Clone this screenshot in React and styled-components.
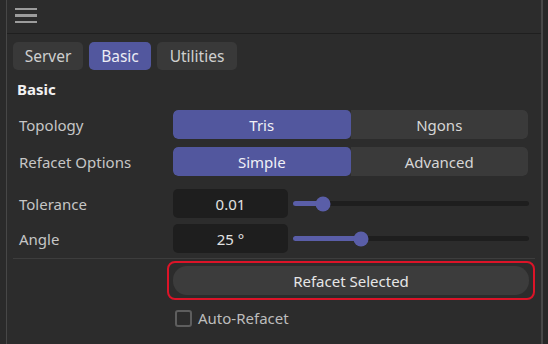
import { useState } from 'react'
import styled, { createGlobalStyle } from 'styled-components';

const GlobalStyle = createGlobalStyle`
  body {
    margin: 0;
    background: #262626;
    font-family: "Noto Sans", "Open Sans", sans-serif;
  }
`;

const Frame = styled.div`
  display: flex;
  height: 344px;
  width: 548px;
  overflow: hidden;
`;

const Gutter = styled.div`
  width: 6px;
  background: #2a2a2a;
  border-right: 1px solid #474747;
`;

const EdgeRight = styled.div`
  flex: 1;
  background: #272727;
  border-left: 2px solid #474747;
`;

const Panel = styled.div`
  width: 534px;
  background: #2c2c2c;
  display: flex;
  flex-direction: column;
`;

const TopBar = styled.div`
  height: 33px;
  border-bottom: 1px solid #1f1f1f;
  display: flex;
  align-items: center;
  padding-left: 8px;
`;

const Burger = styled.div`
  display: flex;
  flex-direction: column;
  gap: 4px;
  margin-top: -2px;

  span {
    display: block;
    width: 22px;
    height: 2.5px;
    background: #9c9c9c;
  }
`;

const Body = styled.div`
  padding: 8px 6px 0 6px;
  display: flex;
  flex-direction: column;
`;

const Tabs = styled.div`
  display: flex;
  gap: 6px;
`;

const Tab = styled.div`
  height: 28px;
  width: ${p => p.$w}px;
  border-radius: 5px;
  background: ${p => (p.$active ? '#52579e' : '#393939')};
  color: ${p => (p.$active ? '#ececf4' : '#cfcfcf')};
  font-size: 15.5px;
  display: flex;
  align-items: center;
  justify-content: center;
`;

const Heading = styled.div`
  font-weight: 700;
  font-size: 15px;
  color: #f2f2f2;
  padding-left: 4px;
  margin-top: 8px;
  height: 22px;
  line-height: 22px;
`;

const Row = styled.div`
  display: flex;
  align-items: center;
  height: 29px;
  margin-top: ${p => p.$mt}px;
`;

const Label = styled.div`
  width: 154px;
  padding-left: 6px;
  color: #c6c6c6;
  font-size: 15px;
`;

const Segments = styled.div`
  display: flex;
  width: 355px;
  height: 100%;
  border-radius: 5px;
  overflow: hidden;
`;

const Segment = styled.div`
  flex: 1;
  display: flex;
  align-items: center;
  justify-content: center;
  background: ${p => (p.$active ? '#52579e' : '#3a3a3a')};
  color: ${p => (p.$active ? '#f0f0f6' : '#d6d6d6')};
  font-size: 15px;
  border-radius: ${p => (p.$active ? '5px' : '0 5px 5px 0')};
`;

const Field = styled.div`
  width: 115px;
  height: 100%;
  border-radius: 5px;
  background: #1e1e1e;
  color: #e2e2e2;
  font-size: 15px;
  display: flex;
  align-items: center;
  justify-content: center;
`;

const Slider = styled.div`
  position: relative;
  margin-left: 5px;
  width: 236px;
  height: 5px;
  border-radius: 3px;
  background: #1e1e1e;
`;

const Fill = styled.div`
  position: absolute;
  left: 0;
  top: 0;
  height: 100%;
  border-radius: 3px 0 0 3px;
  background: #5a5ea8;
`;

const Thumb = styled.div`
  position: absolute;
  top: 50%;
  width: 15px;
  height: 15px;
  border-radius: 50%;
  background: #5a5ea8;
  transform: translate(-50%, -50%);
`;

const Divider = styled.div`
  height: 1px;
  width: 522px;
  background: #3d3d3d;
  margin-top: 5px;
`;

const ActionRow = styled.div`
  display: flex;
  padding-left: 154px;
  margin-top: 2px;
`;

const Highlight = styled.div`
  width: 364px;
  height: 35px;
  border: 2px solid #dc1428;
  border-radius: 8px;
  display: flex;
  align-items: center;
  justify-content: center;
`;

const Button = styled.div`
  width: 356px;
  height: 29px;
  border-radius: 14px;
  background: #3c3c3c;
  color: #e6e6e6;
  font-size: 15px;
  display: flex;
  align-items: center;
  justify-content: center;
`;

const CheckRow = styled.label`
  display: flex;
  align-items: center;
  gap: 6px;
  padding-left: 162px;
  margin-top: 8px;
  color: #bdbdbd;
  font-size: 15px;
`;

const Box = styled.span`
  width: 13px;
  height: 13px;
  border: 2px solid #5e5e5e;
  border-radius: 3px;
  background: ${p => (p.$on ? '#52579e' : 'transparent')};
`;

const sliders = [
  { label: 'Tolerance', value: '0.01', pos: 30, mt: 13 },
  { label: 'Angle', value: '25 °', pos: 68, mt: 6 },
];

const App = () => {
    const [topology, setTopology] = useState('Tris');
    const [mode, setMode] = useState('Simple');
    const [auto, setAuto] = useState(false);

    return (
        <>
            <GlobalStyle />
            <Frame>
                <Gutter />
                <Panel>
                    <TopBar>
                        <Burger><span /><span /><span /></Burger>
                    </TopBar>
                    <Body>
                        <Tabs>
                            <Tab $w={70}>Server</Tab>
                            <Tab $w={62} $active>Basic</Tab>
                            <Tab $w={80}>Utilities</Tab>
                        </Tabs>
                        <Heading>Basic</Heading>

                        <Row $mt={10}>
                            <Label>Topology</Label>
                            <Segments>
                                {['Tris', 'Ngons'].map(o => (
                                    <Segment key={o} $active={topology === o} onClick={() => setTopology(o)}>{o}</Segment>
                                ))}
                            </Segments>
                        </Row>
                        <Row $mt={8}>
                            <Label>Refacet Options</Label>
                            <Segments>
                                {['Simple', 'Advanced'].map(o => (
                                    <Segment key={o} $active={mode === o} onClick={() => setMode(o)}>{o}</Segment>
                                ))}
                            </Segments>
                        </Row>

                        {sliders.map(s => (
                            <Row key={s.label} $mt={s.mt}>
                                <Label>{s.label}</Label>
                                <Field>{s.value}</Field>
                                <Slider>
                                    <Fill style={{ width: `${s.pos}px` }} />
                                    <Thumb style={{ left: `${s.pos}px` }} />
                                </Slider>
                            </Row>
                        ))}

                        <Divider />
                        <ActionRow>
                            <Highlight>
                                <Button>Refacet Selected</Button>
                            </Highlight>
                        </ActionRow>
                        <CheckRow onClick={() => setAuto(!auto)}>
                            <Box $on={auto} />
                            Auto-Refacet
                        </CheckRow>
                    </Body>
                </Panel>
                <EdgeRight />
            </Frame>
        </>
    )
}

export default App;
